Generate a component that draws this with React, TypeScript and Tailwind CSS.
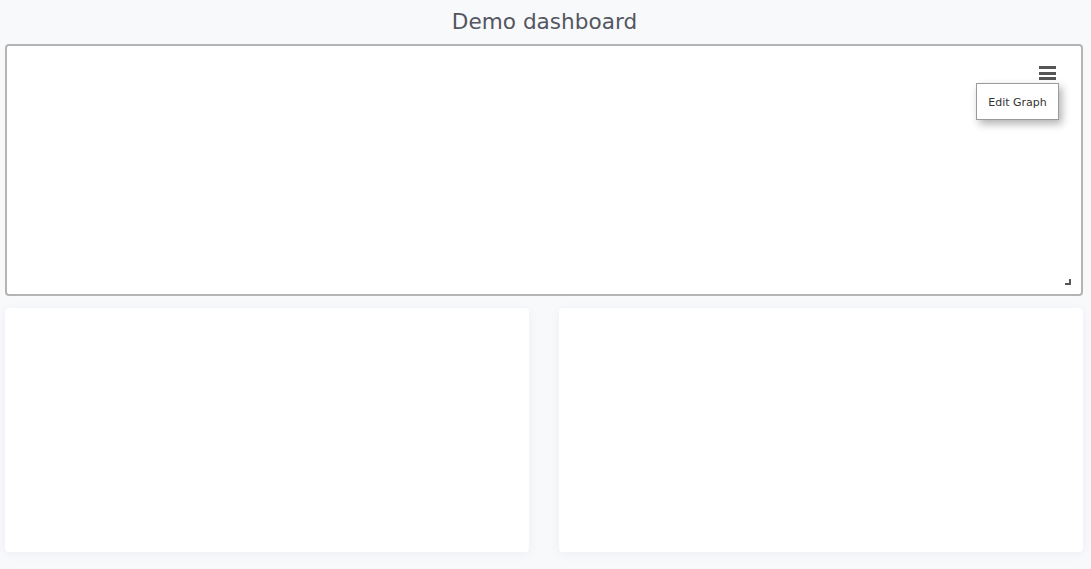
import React from "react";

export default function App() {
  return (
    <div
      className="w-[1091px] h-[569px] bg-[#f8f9fb] overflow-hidden pl-[5px] pr-[8px]"
      style={{ fontFamily: '"DejaVu Sans", sans-serif' }}
    >
      <div className="h-[44px] flex items-center justify-center pl-[1px]">
        <h1 className="text-[21.6px] text-[#54565f] leading-none">Demo dashboard</h1>
      </div>
      <div className="relative h-[252px] bg-white border-2 border-[#b4b4b4] rounded-[4px]">
        <div className="absolute right-[25px] top-[20px] w-[17px] flex flex-col gap-[2.5px]">
          <div className="h-[3px] bg-[#555]" />
          <div className="h-[3px] bg-[#555]" />
          <div className="h-[3px] bg-[#555]" />
        </div>
        <div className="absolute right-[22px] top-[37px] w-[83px] h-[37px] bg-white border border-[#9a9a9a] shadow-[3px_4px_8px_rgba(0,0,0,0.3)] flex items-center justify-center pt-[3px]">
          <span className="text-[11px] text-[#333]">Edit Graph</span>
        </div>
        <div className="absolute right-[10px] bottom-[9px] w-[6px] h-[6px] border-r-2 border-b-2 border-[#555]" />
      </div>
      <div className="mt-[12px] flex gap-[30px]">
        <div className="w-[524px] h-[244px] bg-white rounded-[4px] shadow-[0_2px_10px_rgba(100,110,150,0.08)]" />
        <div className="w-[524px] h-[244px] bg-white rounded-[4px] shadow-[0_2px_10px_rgba(100,110,150,0.08)]" />
      </div>
    </div>
  );
}
